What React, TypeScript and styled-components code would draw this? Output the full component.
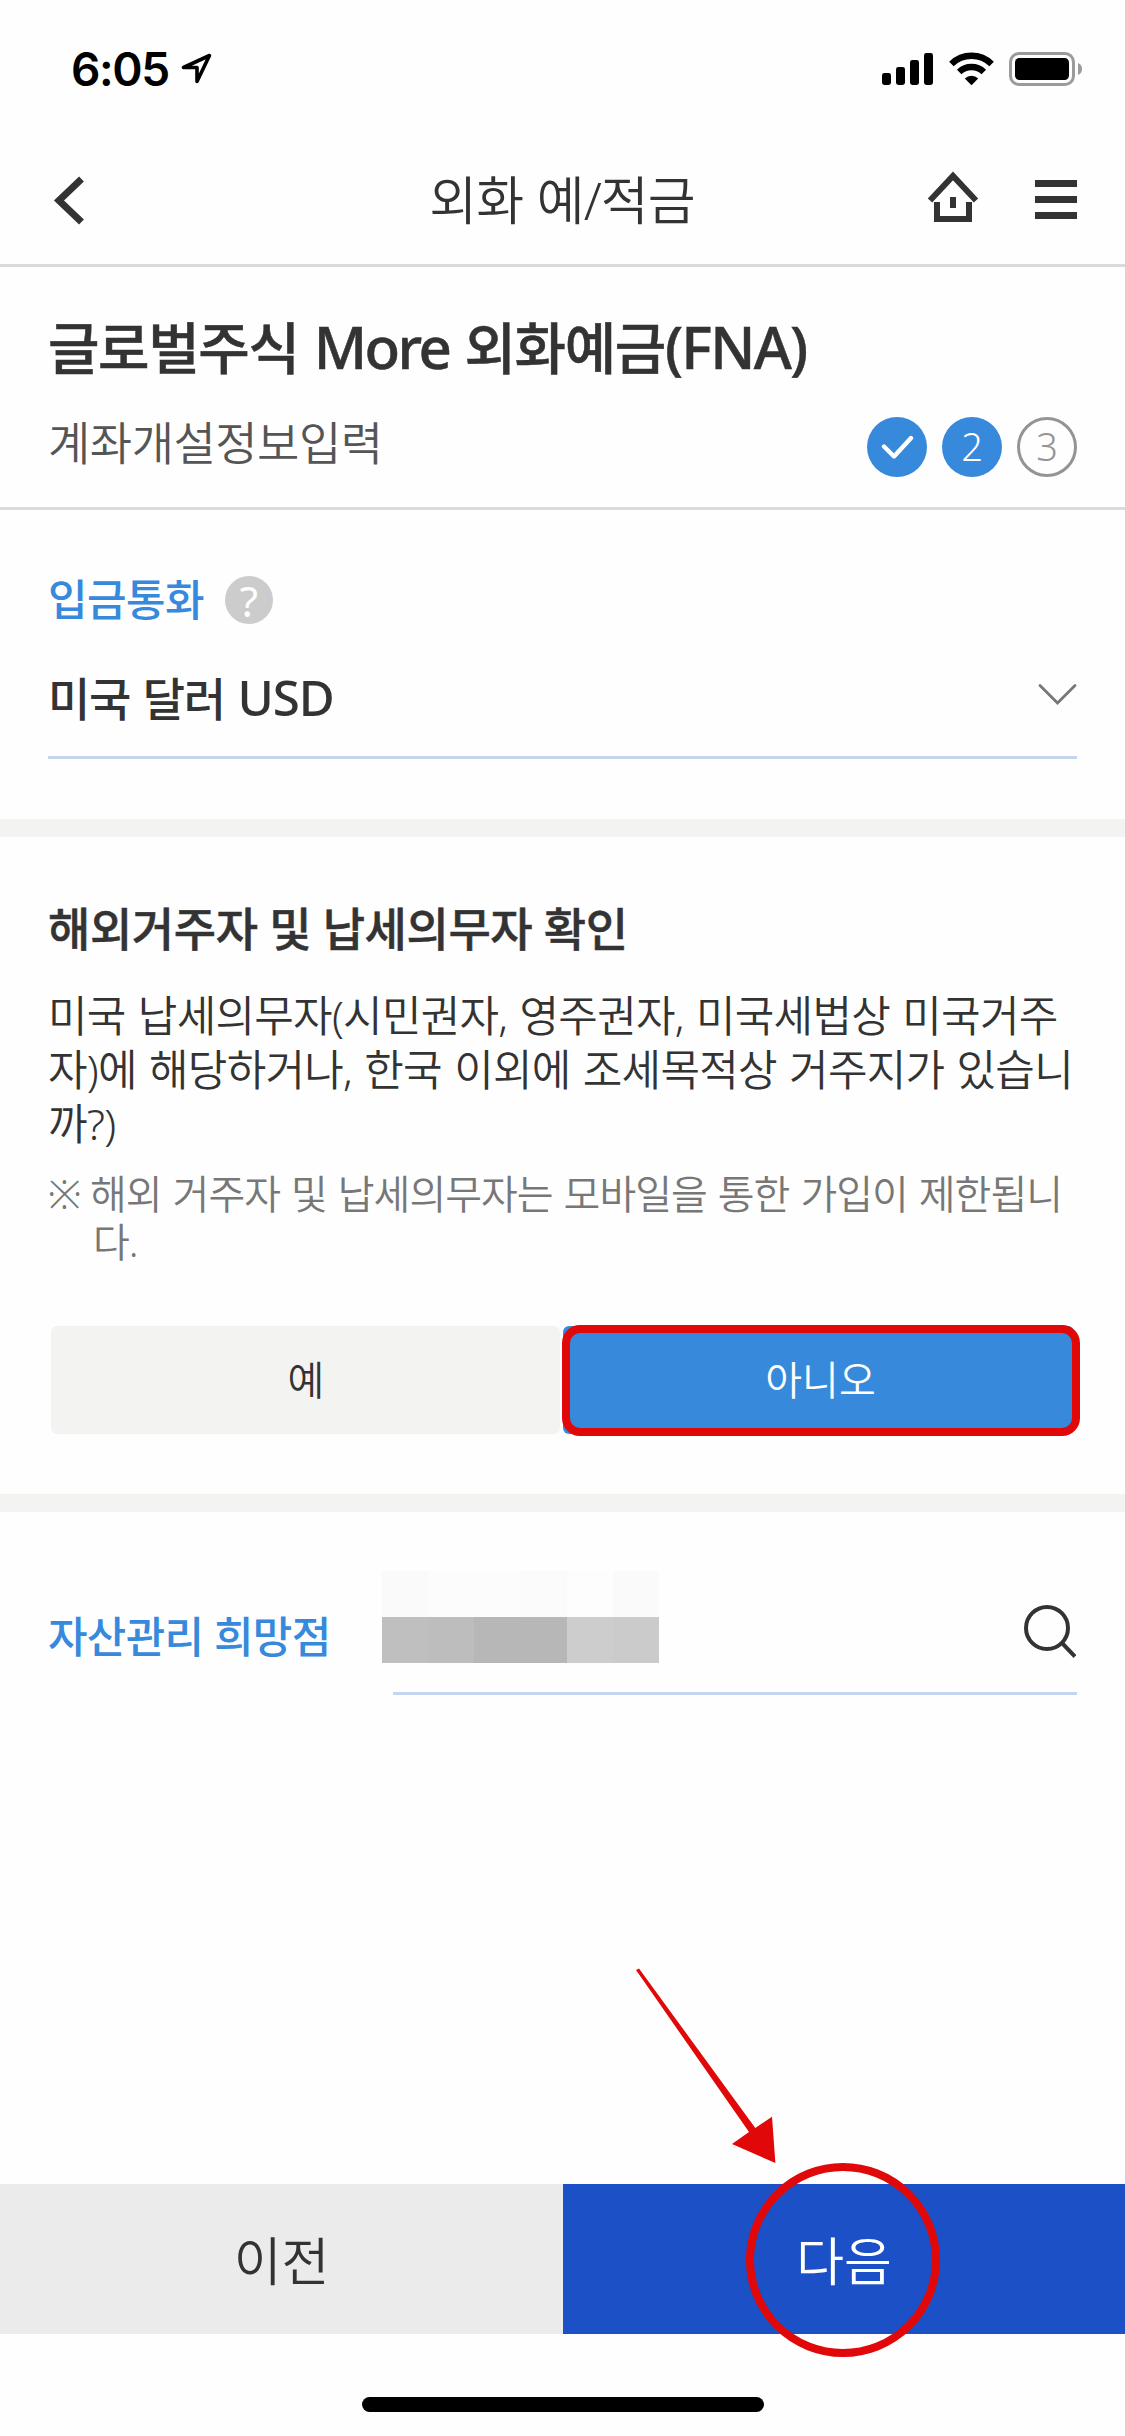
import React from "react";
import styled, { createGlobalStyle } from "styled-components";

const color = {
  ink: "#333333",
  sub: "#555555",
  note: "#777777",
  blue: "#3789dc",
  deepBlue: "#1c50c6",
  red: "#e00808",
  line: "#dadada",
  field: "#c4d4ef",
  band: "#f3f3f1",
};

const GlobalStyle = createGlobalStyle`
  * { box-sizing: border-box; }
  body { margin: 0; background: #ffffff; }
  button { border: 0; padding: 0; background: none; font: inherit; color: inherit; }
  h1, h2, p { margin: 0; }
  svg { display: block; flex: none; }
`;

const Screen = styled.div`
  width: 1125px;
  height: 2436px;
  display: flex;
  flex-direction: column;
  background: #fefefe;
  color: ${color.ink};
  font-family: "Noto Sans", "Noto Sans CJK KR", sans-serif;
  overflow: hidden;
`;

type TextProps = {
  $size: number;
  $line: number;
  $weight?: number;
  $track?: number;
  $word?: number;
  $stroke?: number;
  $color?: string;
};

const Text = styled.span<TextProps>`
  display: block;
  white-space: pre;
  padding-top: 0.048em;
  margin-bottom: -0.048em;
  font-size: ${(p) => p.$size}px;
  line-height: ${(p) => p.$line}px;
  font-weight: ${(p) => p.$weight ?? 400};
  letter-spacing: ${(p) => p.$track ?? 0}px;
  word-spacing: ${(p) => p.$word ?? 0}px;
  -webkit-text-stroke: ${(p) => p.$stroke ?? 0}px currentColor;
  color: ${(p) => p.$color ?? "inherit"};
`;

const Latin = styled.span<{ $scale: number; $track: number }>`
  font-size: ${(p) => p.$scale}em;
  line-height: 0;
  letter-spacing: ${(p) => p.$track}px;
`;

const StatusBar = styled.div`
  height: 132px;
  padding: 0 42px 0 71px;
  display: flex;
  align-items: flex-start;
  justify-content: space-between;
`;

const Clock = styled.div`
  display: flex;
  gap: 12px;
  padding-top: 52px;
  color: #000;
  font: 600 46px/34px Inter, sans-serif;
  letter-spacing: -1.4px;
  svg { margin-top: 1px; }
`;

const StatusIcons = styled.div`
  display: flex;
  gap: 15px;
  padding-top: 52px;
`;

const NavBar = styled.header`
  height: 135px;
  border-bottom: 3px solid ${color.line};
  padding: 0 48px 0 53px;
  display: grid;
  grid-template-columns: 150px 1fr 156px;
  align-items: center;
`;

const NavTitle = styled.div`
  display: flex;
  justify-content: center;
`;

const NavActions = styled.div`
  display: flex;
  justify-content: flex-end;
  align-items: center;
  gap: 56px;
`;

const TitleBlock = styled.section`
  height: 243px;
  padding: 37px 48px 0 48px;
  border-bottom: 3px solid ${color.line};
`;

const StepRow = styled.div`
  margin-top: 33px;
  display: flex;
  justify-content: space-between;
  align-items: flex-start;
`;

const Steps = styled.div`
  display: flex;
  gap: 15px;
`;

const Step = styled.div<{ $filled?: boolean }>`
  width: 60px;
  height: 60px;
  border-radius: 50%;
  display: flex;
  align-items: center;
  justify-content: center;
  font-size: 38px;
  line-height: 54px;
  padding-bottom: 3px;
  font-weight: 300;
  color: ${(p) => (p.$filled ? "#fff" : "#949494")};
  background: ${(p) => (p.$filled ? color.blue : "transparent")};
  border: ${(p) => (p.$filled ? "0" : "3px solid #949494")};
`;

const Band = styled.div`
  height: 18px;
  flex: none;
  background: ${color.band};
`;

const CurrencyBlock = styled.section`
  height: 309px;
  padding: 66px 48px 0;
`;

const LabelRow = styled.div`
  display: flex;
  align-items: flex-start;
  gap: 21px;
  height: 48px;
`;

const Help = styled.button`
  width: 48px;
  height: 48px;
  border-radius: 50%;
  background: #cccccc;
  color: #fff;
  font-size: 42px;
  line-height: 47px;
  text-align: center;
`;

const Select = styled.div`
  margin-top: 12px;
  height: 123px;
  display: flex;
  align-items: center;
  justify-content: space-between;
  border-bottom: 3px solid ${color.field};
`;

const TaxBlock = styled.section`
  height: 657px;
  padding: 59px 48px 0;
`;

const Paragraph = styled.div`
  margin-top: 31px;
`;

const Notice = styled.div`
  margin-top: 19px;
  display: flex;
`;

const NoticeMark = styled.div`
  width: 42px;
  flex: none;
`;

const NoticeBody = styled.div`
  padding-left: 3px;
  text-indent: -3px;
`;

const Choices = styled.div`
  margin: 62px 0 0 3px;
  display: grid;
  grid-template-columns: 509px 511px;
  gap: 3px;
`;

const Choice = styled.button<{ $selected?: boolean }>`
  position: relative;
  height: 108px;
  padding: ${(p) => (p.$selected ? "0 0 3px 4px" : "0 0 3px 1px")};
  border-radius: 6px;
  display: flex;
  align-items: center;
  justify-content: center;
  background: ${(p) => (p.$selected ? color.blue : color.band)};
  color: ${(p) => (p.$selected ? "#fff" : color.ink)};
`;

const BoxMark = styled.div`
  position: absolute;
  inset: -1px -6px -2px -1px;
  border: 8px solid ${color.red};
  border-radius: 18px;
`;

const BranchBlock = styled.section`
  flex: 1;
  padding: 59px 48px 0;
  display: flex;
  align-items: flex-start;
`;

const BranchLabel = styled.div`
  width: 345px;
`;

const BranchField = styled.div`
  flex: 1;
  height: 124px;
  display: flex;
  justify-content: space-between;
  border-bottom: 3px solid ${color.field};
`;

const Mosaic = styled.div`
  width: 277px;
  height: 92px;
  margin-left: -11px;
  display: grid;
  grid-template-columns: repeat(6, 1fr);
  grid-template-rows: 46px 46px;
`;

const Tile = styled.div<{ $shade: string }>`
  background: ${(p) => p.$shade};
`;

const SearchButton = styled.button`
  align-self: flex-start;
  padding: 34px 1px 0 0;
`;

const Footer = styled.footer`
  position: relative;
  display: grid;
  grid-template-columns: 563px 562px;
  height: 150px;
`;

const FooterButton = styled.button<{ $primary?: boolean }>`
  position: relative;
  display: flex;
  align-items: center;
  justify-content: center;
  background: ${(p) => (p.$primary ? color.deepBlue : "#ebebeb")};
  color: ${(p) => (p.$primary ? "#fff" : color.ink)};
`;

const RingMark = styled.div`
  position: absolute;
  left: 183px;
  top: -21px;
  width: 194px;
  height: 194px;
  border: 8px solid ${color.red};
  border-radius: 50%;
`;

const ArrowMark = styled.svg`
  position: absolute;
  left: 630px;
  top: -224px;
`;

const HomeArea = styled.div`
  height: 102px;
  padding-top: 63px;
  display: flex;
  justify-content: center;
`;

const HomeIndicator = styled.div`
  width: 402px;
  height: 15px;
  border-radius: 8px;
  background: #000;
`;

const tiles = [
  "#fafafa", "#fcfcfc", "#fcfcfc", "#fbfbfb", "#fdfdfd", "#fafafa",
  "#bfbfbf", "#bdbdbd", "#b7b7b7", "#b7b7b7", "#cdcdcd", "#cbcbcb",
];

const question =
  "미국 납세의무자(시민권자, 영주권자, 미국세법상 미국거주\n" +
  "자)에 해당하거나, 한국 이외에 조세목적상 거주지가 있습니\n" +
  "까?)";

const notice = "해외 거주자 및 납세의무자는 모바일을 통한 가입이 제한됩니\n다.";

const LocationIcon = () => (
  <svg width="31" height="32" viewBox="0 0 31 32">
    <path d="M28.5 2.5 L2.5 14.5 H16 V28.5 Z" fill="none" stroke="#000" strokeWidth="3.6" strokeLinejoin="round" />
  </svg>
);

const SignalIcon = () => (
  <svg width="52" height="34" viewBox="0 0 52 34">
    <rect x="0" y="21" width="9" height="12" rx="2.4" />
    <rect x="14" y="15" width="9" height="18" rx="2.4" />
    <rect x="28" y="8" width="9" height="25" rx="2.4" />
    <rect x="42" y="1" width="9" height="32" rx="2.4" />
  </svg>
);

const WifiIcon = () => (
  <svg width="45" height="34" viewBox="0 0 45 34">
    <g fill="none" stroke="#000" strokeWidth="6.4">
      <path d="M2.4 12 A28.6 28.6 0 0 1 42.6 12" />
      <path d="M10.2 20 A17.5 17.5 0 0 1 34.8 20" />
    </g>
    <path d="M22.5 33.2 L15.8 26.4 A9.6 9.6 0 0 1 29.2 26.4 Z" />
  </svg>
);

const BatteryIcon = () => (
  <svg width="74" height="34" viewBox="0 0 74 34">
    <rect x="1.5" y="1.5" width="63" height="31" rx="8.5" fill="none" stroke="#9b9b9b" strokeWidth="3" />
    <rect x="6" y="6" width="54" height="22" rx="4.5" />
    <path d="M69 11 A6.5 6.5 0 0 1 69 23 Z" fill="#9b9b9b" />
  </svg>
);

const BackIcon = () => (
  <svg width="34" height="56" viewBox="0 -3 34 56">
    <path d="M28.5 6 L6 27.5 L28.5 49" fill="none" stroke="#333" strokeWidth="7" />
  </svg>
);

const HomeIcon = () => (
  <svg width="52" height="54" viewBox="0 1 52 54">
    <g fill="none" stroke="#333">
      <path d="M3 30.5 L26 6 L49 30.5" strokeWidth="6" />
      <path d="M10 32 V49 H42 V32" strokeWidth="6" />
    </g>
    <rect x="23" y="27" width="6" height="11" fill="#333" />
  </svg>
);

const MenuIcon = () => (
  <svg width="42" height="42" viewBox="0 0 42 42">
    <rect y="3" width="42" height="7" fill="#333" />
    <rect y="19" width="42" height="7" fill="#333" />
    <rect y="35" width="42" height="7" fill="#333" />
  </svg>
);

const CheckIcon = () => (
  <svg width="34" height="28" viewBox="0 0 34 28">
    <path d="M4 14.5 L14 24.5 L31 6" fill="none" stroke="#fff" strokeWidth="4.4" strokeLinecap="round" strokeLinejoin="round" />
  </svg>
);

const ChevronIcon = () => (
  <svg width="40" height="28" viewBox="0 0 40 28">
    <path d="M3 3.5 L20.5 21 L38 3.5" fill="none" stroke="#777" strokeWidth="2.8" strokeLinecap="round" />
  </svg>
);

const SearchIcon = () => (
  <svg width="52" height="54" viewBox="0 0 52 54">
    <circle cx="23" cy="23" r="21" fill="none" stroke="#333" strokeWidth="4" />
    <path d="M38 38 L51 51.5" stroke="#333" strokeWidth="4" />
  </svg>
);

export default function App() {
  return (
    <Screen>
      <GlobalStyle />
      <StatusBar>
        <Clock>
          6:05
          <LocationIcon />
        </Clock>
        <StatusIcons>
          <SignalIcon />
          <WifiIcon />
          <BatteryIcon />
        </StatusIcons>
      </StatusBar>

      <NavBar>
        <BackIcon />
        <NavTitle>
          <Text $size={52} $line={60} $weight={350} $track={-0.9} $word={1}>외화 예/적금</Text>
        </NavTitle>
        <NavActions>
          <HomeIcon />
          <MenuIcon />
        </NavActions>
      </NavBar>

      <TitleBlock>
        <Text as="h1" $size={56} $line={80} $weight={500} $track={-1.4} $word={2} $stroke={0.5}>
          글로벌주식 <Latin $scale={1.04} $track={-2.6}>More</Latin> 외화예금<Latin $scale={1.04} $track={-1.8}>(FNA)</Latin>
        </Text>
        <StepRow>
          <Text $size={46} $line={46} $weight={350} $track={-0.5} $color={color.sub}>계좌개설정보입력</Text>
          <Steps>
            <Step $filled><CheckIcon /></Step>
            <Step $filled>2</Step>
            <Step>3</Step>
          </Steps>
        </StepRow>
      </TitleBlock>

      <CurrencyBlock>
        <LabelRow>
          <Text $size={43} $line={43} $weight={500} $track={-0.6} $color={color.blue}>입금통화</Text>
          <Help>?</Help>
        </LabelRow>
        <Select>
          <Text $size={46} $line={60} $weight={500} $track={-1.3} $word={2}>
            미국 달러 <Latin $scale={1.07} $track={-1}>USD</Latin>
          </Text>
          <ChevronIcon />
        </Select>
      </CurrencyBlock>

      <Band />

      <TaxBlock>
        <Text as="h2" $size={46} $line={60} $weight={500} $track={-0.4} $stroke={0.5}>해외거주자 및 납세의무자 확인</Text>
        <Paragraph>
          <Text as="p" $size={43} $line={54} $weight={350} $track={-0.75} $word={1.8}>{question}</Text>
        </Paragraph>
        <Notice>
          <NoticeMark>
            <Text $size={40} $line={48} $weight={350} $color={color.note}>※</Text>
          </NoticeMark>
          <NoticeBody>
            <Text as="p" $size={40} $line={48} $weight={350} $track={-1} $word={1.6} $color={color.note}>{notice}</Text>
          </NoticeBody>
        </Notice>
        <Choices>
          <Choice><Text $size={40} $line={48} $weight={350}>예</Text></Choice>
          <Choice $selected>
            <Text $size={40} $line={48} $weight={350}>아니오</Text>
            <BoxMark />
          </Choice>
        </Choices>
      </TaxBlock>

      <Band />

      <BranchBlock>
        <BranchLabel>
          <Text $size={43} $line={127} $weight={500} $track={-0.7} $color={color.blue}>자산관리 희망점</Text>
        </BranchLabel>
        <BranchField>
          <Mosaic>
            {tiles.map((shade, i) => (
              <Tile key={i} $shade={shade} />
            ))}
          </Mosaic>
          <SearchButton><SearchIcon /></SearchButton>
        </BranchField>
      </BranchBlock>

      <Footer>
        <FooterButton><Text $size={52} $line={60} $weight={350}>이전</Text></FooterButton>
        <FooterButton $primary>
          <Text $size={52} $line={60} $weight={350}>다음</Text>
          <RingMark />
        </FooterButton>
        <ArrowMark width="150" height="210" viewBox="0 0 150 210">
          <path d="M6 10 L9 8.5 L125.3 168 L142 156.7 L145.4 203 L102 184 L119 172 Z" fill={color.red} />
        </ArrowMark>
      </Footer>

      <HomeArea>
        <HomeIndicator />
      </HomeArea>
    </Screen>
  );
}
